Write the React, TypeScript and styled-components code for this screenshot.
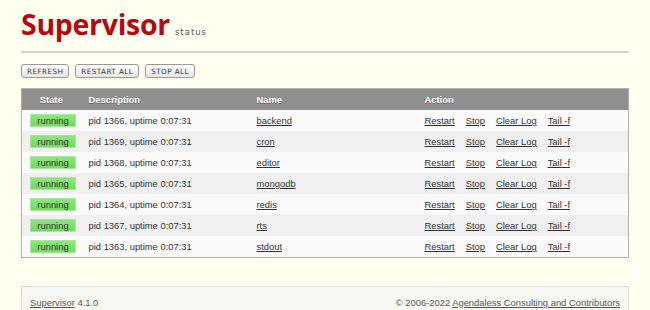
import React from 'react';
import styled, { createGlobalStyle } from 'styled-components';

const GlobalStyle = createGlobalStyle`
  body {
    margin: 0;
    background: #fffff0;
    font-family: "Liberation Sans", Arial, sans-serif;
    font-size: 9.4px;
    color: #333;
  }
`;

const Wrapper = styled.div`
  padding: 0 21px;
`;

const Header = styled.div`
  display: flex;
  align-items: baseline;
  gap: 5px;
  padding-top: 9px;
  border-bottom: 2px solid #d4d4cc;
  box-sizing: border-box;
  height: 53px;
`;

const Logo = styled.h1`
  margin: 0;
  font-family: "Open Sans", sans-serif;
  font-weight: 700;
  font-size: 28.5px;
  letter-spacing: -0.3px;
  color: #b30a12;
  line-height: 30px;
`;

const Sub = styled.span`
  font-family: "DejaVu Sans", sans-serif;
  font-size: 8.5px;
  letter-spacing: 1px;
  color: #555;
`;

const Buttons = styled.div`
  display: flex;
  gap: 6px;
  margin: 11px 0 10px;
`;

const Button = styled.button`
  font-family: "DejaVu Sans", sans-serif;
  font-size: 7.2px;
  letter-spacing: 0.45px;
  color: #333;
  height: 14px;
  padding: 0 5px;
  margin: 0;
  border: 1px solid #9a9a9a;
  border-radius: 3px;
  background: linear-gradient(#ffffff, #e6e6e6);
  box-shadow: inset 0 1px 0 #fff;
  cursor: pointer;
`;

const Table = styled.table`
  width: 100%;
  border-collapse: collapse;
  border: 1px solid #b0b0b0;
  table-layout: fixed;
`;

const Th = styled.th<{ $center?: boolean }>`
  background: #8f8f8f;
  color: #fff;
  font-weight: bold;
  text-align: ${(p) => (p.$center ? 'center' : 'left')};
  height: 21px;
  padding: 0 8px;
  text-shadow: 0 1px 0 #6a6a6a;
`;

const Row = styled.tr<{ $alt: boolean }>`
  background: ${(p) => (p.$alt ? '#f0f0f0' : '#fafafa')};
`;

const Td = styled.td`
  height: 21px;
  padding: 0 8px;
  white-space: nowrap;
`;

const Status = styled.span`
  display: block;
  width: 44px;
  height: 11px;
  line-height: 11px;
  text-align: center;
  background: linear-gradient(#8ee77c, #74d862);
  border: 1px solid #a8e89c;
  color: #333;
`;

const Link = styled.a`
  color: #333;
  text-decoration: underline;
`;

const Actions = styled.div`
  display: flex;
  gap: 11px;
`;

const Footer = styled.div`
  display: flex;
  justify-content: space-between;
  margin-top: 28px;
  padding: 0 8px;
  height: 30px;
  align-items: center;
  border: 1px solid #ddd;
  border-bottom: none;
  background: #f8f8f2;
  color: #555;
`;

const FooterLink = styled.a`
  color: #555;
  text-decoration: underline;
`;

const procs = [
  { pid: 1366, name: 'backend' },
  { pid: 1369, name: 'cron' },
  { pid: 1368, name: 'editor' },
  { pid: 1365, name: 'mongodb' },
  { pid: 1364, name: 'redis' },
  { pid: 1367, name: 'rts' },
  { pid: 1363, name: 'stdout' },
];

function App() {
  return (
    <Wrapper>
      <GlobalStyle />
      <Header>
        <Logo>Supervisor</Logo>
        <Sub>status</Sub>
      </Header>
      <Buttons>
        <Button>REFRESH</Button>
        <Button>RESTART ALL</Button>
        <Button>STOP ALL</Button>
      </Buttons>
      <Table>
        <colgroup>
          <col style={{ width: 59 }} />
          <col style={{ width: 168 }} />
          <col style={{ width: 168 }} />
          <col />
        </colgroup>
        <thead>
          <tr>
            <Th $center>State</Th>
            <Th>Description</Th>
            <Th>Name</Th>
            <Th>Action</Th>
          </tr>
        </thead>
        <tbody>
          {procs.map((p, i) => (
            <Row key={p.name} $alt={i % 2 === 1}>
              <Td>
                <Status>running</Status>
              </Td>
              <Td>pid {p.pid}, uptime 0:07:31</Td>
              <Td>
                <Link href="#">{p.name}</Link>
              </Td>
              <Td>
                <Actions>
                  <Link href="#">Restart</Link>
                  <Link href="#">Stop</Link>
                  <Link href="#">Clear Log</Link>
                  <Link href="#">Tail -f</Link>
                </Actions>
              </Td>
            </Row>
          ))}
        </tbody>
      </Table>
      <Footer>
        <span>
          <FooterLink href="#">Supervisor</FooterLink> 4.1.0
        </span>
        <span>
          © 2006-2022 <FooterLink href="#">Agendaless Consulting and Contributors</FooterLink>
        </span>
      </Footer>
    </Wrapper>
  );
}

export default App;
